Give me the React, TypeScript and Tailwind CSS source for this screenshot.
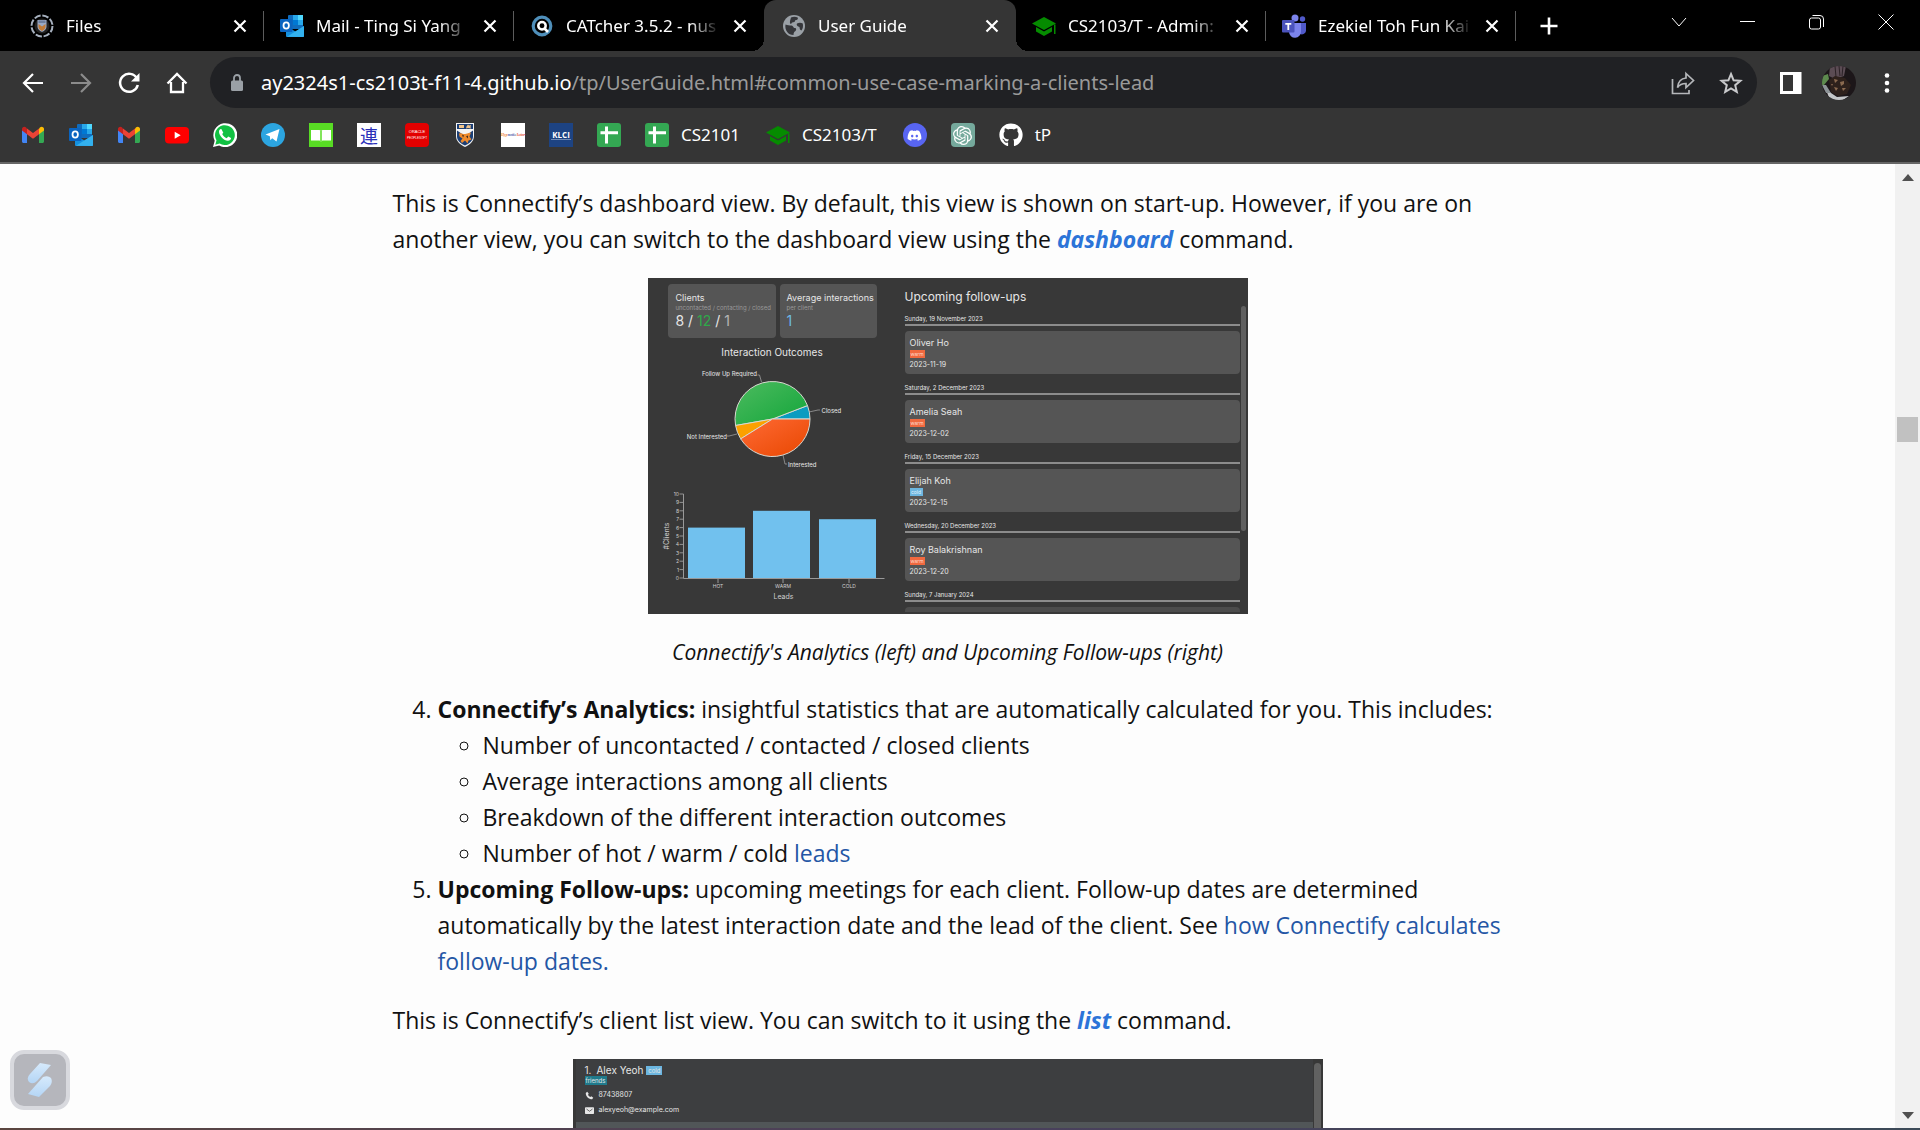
import React from "react";
import { FaDiscord, FaGithub } from "react-icons/fa";
import { SiOpenai } from "react-icons/si";

/* ---------- Brand icons ---------- */

function Gmail() {
  return (
    <svg viewBox="0 0 24 24" className="size-6">
      <path d="M1 6v12.5C1 19.300 1.700 20 2.500 20H6V10.500z" fill="#4285f4" />
      <path d="M23 6v12.500c0 .8-.7 1.500-1.500 1.500H18v-9.500z" fill="#34a853" />
      <path d="M18 5.500v5.700l5-3.800V6c0-2-2.200-3-3.800-1.800z" fill="#fbbc04" />
      <path d="M6 11.200V5.500l6 4.500 6-4.500v5.700L12 15.700z" fill="#ea4335" />
      <path d="M1 6v1.400l5 3.800V5.500L4.800 4.200C3.200 3 1 4 1 6z" fill="#c5221f" />
    </svg>
  );
}

function Outlook() {
  return (
    <svg viewBox="0 0 24 24" className="size-6">
      <rect x="8" y="1" width="15" height="14" rx="1" fill="#0f6cbd" />
      <rect x="13" y="1" width="5" height="5" fill="#28a8ea" />
      <rect x="18" y="1" width="5" height="5" fill="#50d9ff" />
      <rect x="18" y="6" width="5" height="5" fill="#28a8ea" />
      <rect x="13" y="6" width="5" height="5" fill="#0078d4" />
      <path d="M6 12l9.500 5.500L24 12v10a1 1 0 0 1-1 1H7a1 1 0 0 1-1-1z" fill="#1490df" />
      <path d="M7 22.800L24 12v10a1 1 0 0 1-1 1z" fill="#33b1ee" />
      <rect x="0" y="5" width="12.500" height="13" rx="1" fill="#0a64c0" />
      <ellipse cx="6.200" cy="11.500" rx="2.700" ry="3.100" fill="none" stroke="#fff" strokeWidth="1.800" />
    </svg>
  );
}

function Crest() {
  return (
    <svg viewBox="0 0 24 24" className="size-6">
      <path d="M3 0h18v13c0 6-5 9-9 11-4-2-9-5-9-11z" fill="#f4f4f4" />
      <path d="M4 1h16v5H4z" fill="#1c3f75" />
      <path d="M6 2h5v3H6zM15 1.500l1 1 2-.5-.5 2 .5 1.500-3-.5-2 .5.500-2z" fill="#f0c48a" />
      <path d="M4 7.500l8 5.500 8-5.500v6c0 4.500-4 7-8 9-4-2-8-4.500-8-9z" fill="#1c3f75" />
      <path d="M6 10.500c3-1 4 1 6 .5l6-1.500-1.500 4 2 3-3 1-1 3-2.500-3-3 2.500-1.500-2 2-2.500-3-2z" fill="#ef8b2c" />
      <path d="M9 11.500l2 1-1 2zM13 13.500l2-1v3z" fill="#3c2a20" />
    </svg>
  );
}

function FilesIcon() {
  return (
    <svg viewBox="0 0 24 24" className="size-6">
      <circle cx="12" cy="12" r="10.500" fill="none" stroke="#a7b1bf" strokeWidth="2" strokeDasharray="6.500 1.750" />
      <circle cx="12" cy="12" r="7.500" fill="#222" />
      <svg x="6" y="5.500" width="12" height="13" viewBox="0 0 24 24">
        <path d="M3 0h18v13c0 6-5 9-9 11-4-2-9-5-9-11z" fill="#9aa9c4" />
        <path d="M5 8l7 5 7-5v6c0 4-4 6-7 8-3-2-7-4-7-8z" fill="#c27b36" />
        <path d="M5 1h14v5H5z" fill="#6e7f9d" />
      </svg>
    </svg>
  );
}

function Catcher() {
  return (
    <svg viewBox="0 0 24 24" className="size-6">
      <circle cx="12" cy="12" r="8.800" fill="none" stroke="#4f8fba" strokeWidth="3.200" />
      <circle cx="12" cy="11.800" r="3.700" fill="none" stroke="#fff" strokeWidth="2.500" />
      <path d="M14 14l4 4" stroke="#fff" strokeWidth="2.600" />
    </svg>
  );
}

function Globe() {
  return (
    <svg viewBox="0 0 24 24" className="size-6">
      <circle cx="12" cy="12" r="11" fill="#9aa0a6" />
      <path
        d="M3.500 10.500c2 1 4 .8 6 1 2 .3 1.500 2.500 3.500 2.500 1.500 0 1.500 2 .5 3-1 .8-2 1.200-2 4C6 21 2.500 16 3.500 10.500zM9 3.500c2.500-1 5-.8 7 .2-.2 1.800-1 2.500-2.800 2.500-.2 2-1.500 2-3 2.300C9 9 10 10 8.500 10 7 8 8.500 6 9 3.500zM15 9.500c2-1 4-1 5.800 0 .5 3 .1 5-1.300 7-1.500-.5-2-2-2-3.500C16 12.500 14 11.500 15 9.500z"
        fill="#35363a"
      />
    </svg>
  );
}

function Cap() {
  return (
    <svg viewBox="0 0 24 24" className="size-6" fill="#058b00">
      <path d="M12 3L0 9.500 12 16l12-6.500z" />
      <path d="M4 13v4.500l8 4.500 8-4.500V13l-8 4.500z" />
      <path d="M22 10.500h1.500V20H22z" />
    </svg>
  );
}

function Teams() {
  return (
    <svg viewBox="0 0 24 24" className="size-6">
      <circle cx="20.500" cy="5" r="2.700" fill="#5059c9" />
      <path d="M16 9h8v7a4 4 0 0 1-7 3z" fill="#5059c9" />
      <circle cx="13" cy="4" r="3.500" fill="#7b83eb" />
      <path d="M7 9h12v8.500a6 6 0 0 1-12 .5z" fill="#7b83eb" />
      <rect x="0" y="6" width="12.500" height="12.500" rx="1" fill="#4b53bc" />
      <path d="M3.300 9h6v1.700H7.200V16H5.400v-5.300H3.300z" fill="#fff" />
    </svg>
  );
}

function Youtube() {
  return (
    <svg viewBox="0 0 24 24" className="size-6">
      <rect x="0" y="4" width="24" height="16.500" rx="4" fill="#f00" />
      <path d="M9.700 8.800l6 3.400-6 3.500z" fill="#fff" />
    </svg>
  );
}

function Whatsapp() {
  return (
    <svg viewBox="0 0 24 24" className="size-6">
      <path d="M0 24l1.700-6.200A12 12 0 1 1 6.200 22.500z" fill="#fff" />
      <path d="M2.300 21.700l1.200-4.400A9.900 9.900 0 1 1 6.700 20.500z" fill="#12c143" />
      <path
        d="M8.500 6.300c-.5-.9-2.500.2-2.500 2.400 0 4 5 9 8.800 9 2.200 0 3.500-1.500 3.200-2.700l-2.800-1.400-1.500 1.700c-2-.8-3.700-2.300-4.500-4.200l1.100-1.400z"
        fill="#fff"
      />
    </svg>
  );
}

function Telegram() {
  return (
    <svg viewBox="0 0 24 24" className="size-6">
      <circle cx="12" cy="12" r="12" fill="#2ca5e0" />
      <path d="M4.500 11.500L18.500 6 15.500 18.500l-4.300-3.200-1.900 2-.5-4z" fill="#fff" />
    </svg>
  );
}

function Book() {
  return (
    <svg viewBox="0 0 24 24" className="size-6">
      <rect width="24" height="24" fill="#58dc24" />
      <path d="M2 7h8.500l1.500 1 1.500-1H22v10.500h-8.500L12 18.500l-1.500-1H2z" fill="#fff" />
      <path d="M12 8v10" stroke="#58dc24" strokeWidth="1.500" />
    </svg>
  );
}

function Cross() {
  return (
    <svg viewBox="0 0 24 24" className="size-6">
      <rect width="24" height="24" rx="3" fill="#34a853" />
      <path d="M9.500 3.500v17M3.500 9.800h17.500" stroke="#fff" strokeWidth="3" />
    </svg>
  );
}

function Kanji() {
  return (
    <span className="flex size-6 items-center justify-center bg-white font-['Noto_Sans_CJK_JP',sans-serif] text-[18px] leading-6 text-[#2a2fb8]">
      連
    </span>
  );
}

function Oracle() {
  return (
    <span className="flex size-6 flex-col items-center justify-center rounded-sm bg-[#e30000] font-['Liberation_Sans',sans-serif] text-[4px] leading-[6px] text-white">
      <span>ORACLE</span>
      <span className="text-[3px]">PEOPLESOFT</span>
    </span>
  );
}

function Hypnotic() {
  return (
    <span className="flex size-6 items-center justify-center bg-white font-['Liberation_Serif',serif] text-[4px] leading-6 font-bold italic">
      <span className="text-[#f08a3c]">Hyp</span>
      <span className="text-[#3b5ba5]">notic</span>
      <span className="text-[#e0352b]">Actor</span>
    </span>
  );
}

function Klci() {
  return (
    <span className="flex size-6 flex-col items-center justify-center bg-[#1d4382] font-['Open_Sans',sans-serif] text-[8px] leading-2 font-bold text-white">
      <span>KLCI</span>
      <span className="h-px w-5 bg-[#6f88b3]" />
    </span>
  );
}

function Discord() {
  return (
    <span className="flex size-6 items-center justify-center rounded-full bg-[#5865f2] text-white">
      <FaDiscord className="size-[15px]" />
    </span>
  );
}

function ChatGpt() {
  return (
    <span className="flex size-6 items-center justify-center rounded-sm bg-[#75a99c] text-white">
      <SiOpenai className="size-[19px]" />
    </span>
  );
}

/* ---------- Browser chrome ---------- */

const tabs = [
  { title: "Files", icon: <FilesIcon /> },
  { title: "Mail - Ting Si Yang", icon: <Outlook /> },
  { title: "CATcher 3.5.2 - nus", icon: <Catcher /> },
  { title: "User Guide", icon: <Globe />, active: true },
  { title: "CS2103/T - Admin:", icon: <Cap /> },
  { title: "Ezekiel Toh Fun Kai", icon: <Teams /> },
];

function TabStrip() {
  return (
    <header className="flex h-[51px] shrink-0 bg-black text-white">
      <div className="flex min-w-0 pl-[14px]">
        {tabs.map((tab, i) => {
          const divider = !tab.active && !tabs[i + 1]?.active;
          return (
            <div
              key={tab.title}
              className={
                tab.active
                  ? "relative flex w-[252px] items-center rounded-t-xl bg-[#353535] pr-3 pl-[18px]"
                  : "relative flex w-[250px] items-center pr-3 pl-4"
              }
            >
              {tab.active && (
                <>
                  <span className="absolute bottom-0 -left-3 size-3 bg-[radial-gradient(circle_at_top_left,#000_12px,#353535_12px)]" />
                  <span className="absolute -right-3 bottom-0 size-3 bg-[radial-gradient(circle_at_top_right,#000_12px,#353535_12px)]" />
                </>
              )}
              {tab.icon}
              <span className="ml-3 flex-1 overflow-hidden mask-r-from-80% mask-r-to-100% text-[17px] whitespace-nowrap">
                {tab.title}
              </span>
              <button aria-label={"Close " + tab.title} className="ml-2 flex size-6 items-center justify-center">
                <svg viewBox="0 0 24 24" className="size-6" stroke="#fff" strokeWidth="2.200">
                  <path d="M6.500 6.500l11 11M17.500 6.500l-11 11" />
                </svg>
              </button>
              {divider && <span className="absolute top-[11px] right-0 h-[30px] w-px bg-[#5c5c5c]" />}
            </div>
          );
        })}
        <button aria-label="New tab" className="ml-5 flex w-[26px] items-center justify-center">
          <svg viewBox="0 0 24 24" className="size-6" stroke="#fff" strokeWidth="2.600">
            <path d="M12 3.500v17M3.500 12h17" />
          </svg>
        </button>
      </div>
      <div className="ml-auto flex h-[43px]" aria-label="Window controls">
        <button aria-label="Search tabs" className="flex w-[69px] items-center justify-center">
          <svg width="18" height="18" fill="none" stroke="#fff">
            <path d="M2 5l7 8 7-8" />
          </svg>
        </button>
        <button aria-label="Minimize" className="flex w-[69px] items-center justify-center">
          <svg width="16" height="16" stroke="#fff">
            <path d="M0 7.500h15" />
          </svg>
        </button>
        <button aria-label="Restore" className="flex w-[69px] items-center justify-center">
          <svg width="16" height="16" fill="none" stroke="#fff">
            <rect x=".5" y="4" width="11" height="11" rx="2" />
            <path d="M3.500 1.500h7.500q3.500 0 3.500 3.500v8" />
          </svg>
        </button>
        <button aria-label="Close window" className="flex w-[69px] items-center justify-center">
          <svg width="16" height="16" stroke="#fff">
            <path d="M.5.500l15 15M15.500.500l-15 15" />
          </svg>
        </button>
      </div>
    </header>
  );
}

function Toolbar() {
  const nav = "flex size-6 items-center justify-center";
  return (
    <div className="flex h-[63px] shrink-0 items-center bg-[#353535] pl-[21px] text-white">
      <div className="flex gap-6">
        <button aria-label="Back" className={nav}>
          <svg viewBox="0 0 24 24" className="size-6" fill="none" stroke="#fff" strokeWidth="2.200">
            <path d="M22 12H4M12 3l-9 9 9 9" />
          </svg>
        </button>
        <button aria-label="Forward" className={nav}>
          <svg viewBox="0 0 24 24" className="size-6" fill="none" stroke="#8c8c8c" strokeWidth="2.200">
            <path d="M2 12h18M12 3l9 9-9 9" />
          </svg>
        </button>
        <button aria-label="Reload" className={nav}>
          <svg viewBox="0 0 24 24" className="size-6" fill="none" stroke="#fff" strokeWidth="2.500">
            <path d="M20 7.500A9 9 0 1 0 20.800 14" />
            <path d="M22.500 2v8.500H14z" fill="#fff" stroke="none" />
          </svg>
        </button>
        <button aria-label="Home" className={nav}>
          <svg viewBox="0 0 24 24" className="size-6" fill="none" stroke="#fff" strokeWidth="2.300">
            <path d="M6 11v10h12V11M2.500 12.500L12 3l9.500 9.500" />
          </svg>
        </button>
      </div>
      <div className="ml-[21px] flex h-[51px] flex-1 items-center rounded-full bg-[#202124] pr-[14px] pl-[19px]">
        <svg viewBox="0 0 16 20" className="mr-4 h-5 w-4">
          <rect x="2" y="7.500" width="12" height="10.500" rx="1.500" fill="#9aa0a6" />
          <path d="M5 8V5a3 3 0 0 1 6 0v3" fill="none" stroke="#9aa0a6" strokeWidth="1.800" />
        </svg>
        <div className="flex-1 text-[20px] leading-6 whitespace-nowrap text-[#9a9a9a]" role="textbox" aria-label="Address" tabIndex={0}>
          <span className="text-white">ay2324s1-cs2103t-f11-4.github.io</span>/tp/UserGuide.html#common-use-case-marking-a-clients-lead
        </div>
        <div className="flex gap-6">
          <button aria-label="Share" className={nav}>
            <svg viewBox="0 0 24 24" className="size-6" fill="none" stroke="#b5b7ba" strokeWidth="1.700">
              <path d="M1.500 8v14.500H18V19" />
              <path d="M15 2.500l7.500 7-7.500 7v-4c-4 0-6.500 1-8.500 4 .5-5.500 3.500-9 8.500-9.500z" />
            </svg>
          </button>
          <button aria-label="Bookmark this page" className={nav}>
            <svg viewBox="0 0 24 24" className="size-6" fill="none" stroke="#c8c9cb" strokeWidth="2">
              <path d="M12 3l2.600 6.300 6.800.5-5.200 4.400 1.600 6.600L12 17.300l-5.800 3.500 1.600-6.600-5.200-4.400 6.800-.5z" />
            </svg>
          </button>
        </div>
      </div>
      <div className="flex items-center gap-[19px] pr-[21px] pl-[22px]">
        <button aria-label="Side panel" className={nav}>
          <svg viewBox="0 0 24 24" className="size-6" fill="none">
            <rect x="2.500" y="2.500" width="18.500" height="19" stroke="#fff" strokeWidth="3" />
            <path d="M14 2h8v20h-8z" fill="#fff" />
          </svg>
        </button>
        <button aria-label="Profile">
          <svg viewBox="0 0 34 34" className="size-[34px]">
            <clipPath id="avatar">
              <circle cx="17" cy="17" r="17" />
            </clipPath>
            <g clipPath="url(#avatar)">
              <path fill="#1c1619" d="M0 0h34v34H0z" />
              <path fill="#5b4c54" d="M8 0h16l-2 10-9 3-6-3z" />
              <path d="M13 0l1 11M17 0l1 10M21 0l-1 10" stroke="#2b2126" />
              <path fill="#5d8a4e" d="M0 10l6-2 1 5-5 6H0z" />
              <path fill="#c4c6c8" d="M4 24l5 3 6 4 12-1-6 4H8z" />
              <path fill="#8d9397" d="M0 19l4 0 5 8-5 0z" />
              <path fill="#2e211c" d="M7 14l6-4 10 2 6 7-4 9-9 2-7-4z" />
              <path fill="#8a6a50" d="M12 13l4 1-3 3zM18 16l4-1 0 3-3 2zM12 21l4 1-2 3zM20 22l4 0-3 3zM9 18l2 0-1 2z" />
            </g>
          </svg>
        </button>
        <button aria-label="Menu" className={nav}>
          <svg viewBox="0 0 24 24" className="size-6" fill="#fff">
            <circle cx="12" cy="4.500" r="2.300" />
            <circle cx="12" cy="12" r="2.300" />
            <circle cx="12" cy="19.500" r="2.300" />
          </svg>
        </button>
      </div>
    </div>
  );
}

const bookmarks: { name: string; icon: React.ReactNode; label?: string }[] = [
  { name: "Gmail", icon: <Gmail /> },
  { name: "Outlook", icon: <Outlook /> },
  { name: "Gmail 2", icon: <Gmail /> },
  { name: "YouTube", icon: <Youtube /> },
  { name: "WhatsApp", icon: <Whatsapp /> },
  { name: "Telegram", icon: <Telegram /> },
  { name: "Reader", icon: <Book /> },
  { name: "Kanji", icon: <Kanji /> },
  { name: "PeopleSoft", icon: <Oracle /> },
  { name: "University", icon: <Crest /> },
  { name: "Journal", icon: <Hypnotic /> },
  { name: "KLCI", icon: <Klci /> },
  { name: "Sheet", icon: <Cross /> },
  { name: "CS2101", icon: <Cross />, label: "CS2101" },
  { name: "CS2103/T", icon: <Cap />, label: "CS2103/T" },
  { name: "Discord", icon: <Discord /> },
  { name: "ChatGPT", icon: <ChatGpt /> },
  { name: "tP", icon: <FaGithub className="size-6" />, label: "tP" },
];

function BookmarksBar() {
  return (
    <nav className="flex h-[50px] shrink-0 items-center gap-6 border-b-2 border-[#666] bg-[#353535] pb-1.5 pl-[21px] text-[17px] text-white">
      {bookmarks.map((b) => (
        <a key={b.name} href="#" aria-label={b.name} className="flex shrink-0 items-center gap-3">
          {b.icon}
          {b.label && <span className="pr-0.5 leading-6">{b.label}</span>}
        </a>
      ))}
    </nav>
  );
}

/* ---------- Dashboard figure ---------- */

const slices = [
  { from: 0, to: 21, fill: "#0a9cc0" },
  { from: 21, to: 190, fill: "url(#green)" },
  { from: 190, to: 212, fill: "#fba100" },
  { from: 212, to: 360, fill: "url(#orange)" },
];

function slicePath(from: number, to: number) {
  const pt = (deg: number) => {
    const a = (deg * Math.PI) / 180;
    return `${124.5 + 37.5 * Math.cos(a)} ${56 - 37.5 * Math.sin(a)}`;
  };
  return `M124.500 56L${pt(from)}A37.5 37.5 0 0 0 ${pt(to)}z`;
}

function PieChart() {
  return (
    <svg viewBox="0 0 240 115" className="h-[115px] w-[240px]" fontSize="6" fill="#e8e8e8">
      <defs>
        <linearGradient id="green" x1="0" y1="0" x2="1" y2="1">
          <stop offset="0" stopColor="#4dbb5f" />
          <stop offset="1" stopColor="#12a53a" />
        </linearGradient>
        <linearGradient id="orange" x1="0" y1="0" x2="1" y2="1">
          <stop offset="0" stopColor="#ff6a35" />
          <stop offset="1" stopColor="#e84700" />
        </linearGradient>
      </defs>
      {slices.map((s) => (
        <path key={s.from} d={slicePath(s.from, s.to)} fill={s.fill} stroke="#d8d8d0" strokeWidth="1" />
      ))}
      <path d="M113.500 19l-2-7h-2M161 49l9-2h2M89 71l-8 2h-2M135 92l2 9h2" fill="none" stroke="#aaa" strokeWidth=".7" />
      <text x="109" y="13" textAnchor="end">Follow Up Required</text>
      <text x="173.500" y="50">Closed</text>
      <text x="79" y="75.500" textAnchor="end">Not Interested</text>
      <text x="140" y="104">Interested</text>
    </svg>
  );
}

const bars = [
  { label: "HOT", x: 40, value: 6 },
  { label: "WARM", x: 105, value: 8 },
  { label: "COLD", x: 171, value: 7 },
];

function BarChart() {
  return (
    <svg viewBox="0 0 240 136" className="h-[136px] w-[240px]" fill="#cfcfcf" fontSize="5">
      {Array.from({ length: 11 }, (_, n) => (
        <g key={n}>
          <text x="31" y={102 - n * 8.4} textAnchor="end">{n}</text>
          <path d={`M31.5 ${100 - n * 8.4}h4`} stroke="#aaa" strokeWidth=".8" />
        </g>
      ))}
      <path d="M35.500 16v84.500h201" fill="none" stroke="#999" />
      {bars.map((b) => (
        <g key={b.label}>
          <rect x={b.x} y={100 - b.value * 8.4} width="57" height={b.value * 8.4} fill="#71c1ee" />
          <path d={`M${b.x + 30} 101v4`} stroke="#999" />
          <text x={b.x + 30} y="110" textAnchor="middle">{b.label}</text>
        </g>
      ))}
      <text x="135.500" y="121" fontSize="7" textAnchor="middle">Leads</text>
      <text fontSize="7" textAnchor="middle" transform="translate(20.500 58) rotate(-90)">#Clients</text>
    </svg>
  );
}

const followUps = [
  { day: "Sunday, 19 November 2023", name: "Oliver Ho", lead: "warm", date: "2023-11-19" },
  { day: "Saturday, 2 December 2023", name: "Amelia Seah", lead: "warm", date: "2023-12-02" },
  { day: "Friday, 15 December 2023", name: "Elijah Koh", lead: "cold", date: "2023-12-15" },
  { day: "Wednesday, 20 December 2023", name: "Roy Balakrishnan", lead: "warm", date: "2023-12-20" },
];

function DayHeading({ children }: { children: React.ReactNode }) {
  return <div className="mb-[5px] border-b-2 border-[#8c8c8c] pt-px text-[6px] leading-[11px]">{children}</div>;
}

function Dashboard() {
  return (
    <div className="mx-auto flex h-[336px] w-[600px] overflow-hidden bg-[#383838] font-['Inter',sans-serif] text-[#e6e6e6]">
      <div className="w-[257px] shrink-0 pt-[6px]">
        <div className="flex h-[54px] gap-1 pl-5">
          <div className="w-[108px] rounded bg-[#555] px-2 pt-2">
            <div className="text-[9px] leading-3">Clients</div>
            <div className="text-[6px] leading-2 whitespace-nowrap text-[#999]">uncontacted / contacting / closed</div>
            <div className="text-[14px] leading-[18px]">
              8 / <span className="text-[#2fa84a]">12</span> / <span className="text-[#b5b5b5]">1</span>
            </div>
          </div>
          <div className="w-[97px] rounded bg-[#555] pt-2 pl-[7px]">
            <div className="text-[9px] leading-3 whitespace-nowrap">Average interactions</div>
            <div className="text-[6px] leading-2 text-[#999]">per client</div>
            <div className="text-[14px] leading-[18px] text-[#6db9e4]">1</div>
          </div>
        </div>
        <div className="mt-1 w-[249px] text-center text-[10px] leading-[21px]">Interaction Outcomes</div>
        <PieChart />
        <BarChart />
      </div>
      <div className="w-[335px] shrink-0 pt-[10px]">
        <div className="mb-[6px] text-[12px] leading-[18px]">Upcoming follow-ups</div>
        {followUps.map((f) => (
          <div key={f.name} className="mb-[7px]">
            <DayHeading>{f.day}</DayHeading>
            <div className="h-[43px] rounded bg-[#555] pt-[6px] pl-[5px]">
              <div className="text-[9px] leading-3">{f.name}</div>
              <div
                className={
                  f.lead === "warm"
                    ? "mt-px w-[15px] bg-[#f0693f] text-center text-[5px] leading-2 text-[#ffd9cc]"
                    : "mt-px w-[13px] bg-[#6cb6e0] text-center text-[5px] leading-2 text-[#e0f2fb]"
                }
              >
                {f.lead}
              </div>
              <div className="mt-px text-[7px] leading-3">{f.date}</div>
            </div>
          </div>
        ))}
        <DayHeading>Sunday, 7 January 2024</DayHeading>
        <div className="h-[5px] rounded-t bg-[#4c4c4c]" />
      </div>
      <div className="mt-7 ml-px h-[225px] w-[5px] rounded-sm bg-[#606060]" />
    </div>
  );
}

function ClientList() {
  return (
    <div className="mx-auto flex h-[90px] w-[750px] bg-[#383838] pl-[3px] font-['Inter',sans-serif] text-[#e6e6e6]">
      <div className="flex-1">
        <div className="h-[63px] bg-[#3d3e40] pt-[5px] pl-[9px]">
          <div className="flex items-center text-[10px] leading-3">
            <span className="mr-[5px]">1.</span>Alex Yeoh
            <span className="ml-[3px] w-4 bg-[#6cb6e0] text-center text-[6px] leading-[9px]">cold</span>
          </div>
          <div className="w-[22px] bg-[#1f7a8c] text-center text-[6px] leading-[9px]">friends</div>
          <div className="mt-1 flex items-center gap-[5px] text-[7px] leading-3">
            <svg viewBox="0 0 12 12" className="size-[9px]" fill="#e6e6e6">
              <path d="M3 1L1 2.500C1 7 5 11 9.500 11L11 9 8.500 7 7 8C5.500 7.300 4.700 6.500 4 5l1-1.500z" />
            </svg>
            87438807
          </div>
          <div className="mt-[3px] flex items-center gap-[5px] text-[7px] leading-3">
            <svg viewBox="0 0 12 12" className="size-[9px]">
              <rect y="1.500" width="12" height="9" rx="1" fill="#e6e6e6" />
              <path d="M2 4l4 3 4-3" fill="none" stroke="#444" />
            </svg>
            alexyeoh@example.com
          </div>
        </div>
        <div className="h-[27px] bg-[#515658]" />
      </div>
      <div className="ml-px w-[9px] pt-1">
        <div className="h-full w-[7px] rounded-t bg-[#616161]" />
      </div>
    </div>
  );
}

/* ---------- Page ---------- */

function UserGuide() {
  const link = "text-[#2456a5]";
  const command = "font-bold italic text-[#2c74d8]";
  return (
    <main className="min-w-0 flex-1 overflow-hidden bg-[#fdfdfd] pt-[21px] font-['Open_Sans','Noto_Sans',sans-serif] text-[23px] leading-9 text-[#111]">
      <div className="mx-auto max-w-[1110px]">
        <p className="mb-[21px]">
          This is Connectify’s dashboard view. By default, this view is shown on start-up. However, if you are on
          another view, you can switch to the dashboard view using the <a href="#dashboard" className={command}>dashboard</a> command.
        </p>
        <figure className="mb-[21px]">
          <Dashboard />
          <figcaption className="mt-5 text-center text-[21px] leading-9 italic">
            Connectify's Analytics (left) and Upcoming Follow-ups (right)
          </figcaption>
        </figure>
        <ol start={4} className="mb-[23px] list-decimal pl-[45px]">
          <li>
            <strong>Connectify’s Analytics:</strong> insightful statistics that are automatically calculated for you. This includes:
            <ul className="list-[circle] pl-[45px]">
              <li>Number of uncontacted / contacted / closed clients</li>
              <li>Average interactions among all clients</li>
              <li>Breakdown of the different interaction outcomes</li>
              <li>
                Number of hot / warm / cold <a href="#leads" className={link}>leads</a>
              </li>
            </ul>
          </li>
          <li>
            <strong>Upcoming Follow-ups:</strong> upcoming meetings for each client. Follow-up dates are determined
            automatically by the latest interaction date and the lead of the client. See{" "}
            <a href="#follow-up" className={link}>how Connectify calculates follow-up dates.</a>
          </li>
        </ol>
        <p className="mb-[21px]">
          This is Connectify’s client list view. You can switch to it using the <a href="#list" className={command}>list</a> command.
        </p>
        <ClientList />
      </div>
    </main>
  );
}

function ScrollBar() {
  return (
    <div className="flex w-[25px] shrink-0 flex-col items-center bg-[#f1f1f1]" aria-hidden="true">
      <svg width="12" height="8" className="mt-[10px]" fill="#505050">
        <path d="M6 0l6 7H0z" />
      </svg>
      <div className="mt-[235px] h-[25px] w-[21px] bg-[#c1c1c1]" />
      <svg width="12" height="8" className="mt-auto mb-2" fill="#505050">
        <path d="M0 0h12L6 7z" />
      </svg>
    </div>
  );
}

function FloatingButton() {
  return (
    <button
      aria-label="Open assistant"
      className="absolute bottom-[18px] left-[10px] flex size-[60px] items-center justify-center rounded-[14px] border-4 border-[#d8d9de] bg-[#b5b6bc]"
    >
      <svg viewBox="0 0 26 34" className="h-[34px] w-[26px]">
        <defs>
          <linearGradient id="ribbon" x1="0" y1="0" x2="0" y2="1">
            <stop offset="0" stopColor="#d6eafc" />
            <stop offset="1" stopColor="#b4d5f5" />
          </linearGradient>
        </defs>
        <path d="M13 0l11 2L10 18q-4 4-8 1-3-4 1-8z" fill="url(#ribbon)" />
        <path d="M16 14q5-2 8 1 2 4-1 8L12 34 1 31z" fill="url(#ribbon)" />
      </svg>
    </button>
  );
}

export default function App() {
  return (
    <div className="flex h-screen flex-col overflow-hidden font-['Noto_Sans','Open_Sans',sans-serif]">
      <TabStrip />
      <Toolbar />
      <BookmarksBar />
      <div className="relative flex min-h-0 flex-1">
        <UserGuide />
        <ScrollBar />
        <FloatingButton />
      </div>
      <div className="h-0.5 shrink-0 bg-linear-to-r from-[#5b4540] via-[#4a3f5c] to-[#3c4a58]" />
    </div>
  );
}
